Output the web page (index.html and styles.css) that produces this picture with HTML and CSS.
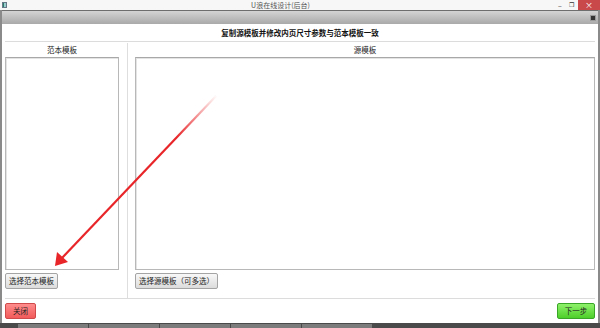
FILE: index.html
```html
<!DOCTYPE html>
<html lang="zh">
<head>
    <meta charset="UTF-8">
    <title>U浪在线设计(后台)</title>
    <link rel="stylesheet" href="styles.css">
</head>
<body>
    <div class="titlebar">
        <span class="app-icon"></span>
        <span class="app-title">U浪在线设计(后台)</span>
        <div class="win-controls">
            <span class="ctl ctl-min">&#8211;</span>
            <span class="ctl ctl-max">&#10064;</span>
            <span class="ctl ctl-close">&#215;</span>
        </div>
    </div>

    <div class="window">
        <div class="window-head">
            <span class="head-close"></span>
        </div>
        <div class="content">
            <h1 class="heading">复制源模板并修改内页尺寸参数与范本模板一致</h1>

            <div class="panels">
                <div class="panel panel-left">
                    <div class="panel-label">范本模板</div>
                    <div class="list-box"></div>
                    <div class="panel-actions">
                        <button class="btn">选择范本模板</button>
                    </div>
                </div>
                <div class="divider"></div>
                <div class="panel panel-right">
                    <div class="panel-label">源模板</div>
                    <div class="list-box"></div>
                    <div class="panel-actions">
                        <button class="btn">选择源模板（可多选）</button>
                    </div>
                </div>
            </div>

            <div class="footer">
                <button class="btn btn-red">关闭</button>
                <button class="btn btn-green">下一步</button>
            </div>
        </div>
    </div>

    <div class="taskbar">
        <span class="task"></span>
        <span class="task"></span>
        <span class="task"></span>
        <span class="task"></span>
        <span class="task"></span>
    </div>

    <!-- annotation arrow -->
    <svg class="arrow" width="600" height="328" viewBox="0 0 600 328">
        <defs>
            <linearGradient id="fade" gradientUnits="userSpaceOnUse" x1="217" y1="95" x2="56" y2="265">
                <stop offset="0" stop-color="#e8262a" stop-opacity="0"/>
                <stop offset="0.25" stop-color="#e8262a" stop-opacity="1"/>
                <stop offset="1" stop-color="#e8262a" stop-opacity="1"/>
            </linearGradient>
        </defs>
        <line x1="217" y1="95" x2="62" y2="258" stroke="url(#fade)" stroke-width="2.2"/>
        <polygon points="55,266 57,252 68,262" fill="#e8262a"/>
    </svg>
</body>
</html>
```

FILE: styles.css
```css
* {
    box-sizing: border-box;
}

body {
    font-family: "Noto Sans CJK SC", "Liberation Sans", sans-serif;
    margin: 0;
    width: 600px;
    height: 328px;
    overflow: hidden;
    background: #fff;
    position: relative;
    display: flex;
    flex-direction: column;
}

/* Title bar */
.titlebar {
    height: 10px;
    background: #f7f7f7;
    display: flex;
    align-items: center;
    position: relative;
}

.app-icon {
    width: 5px;
    height: 6px;
    margin-left: 2px;
    background: linear-gradient(90deg, #2a7a6a 50%, #9cc 50%);
    border: 1px solid #678;
}

.app-title {
    flex: 1;
    text-align: center;
    font-size: 7px;
    color: #555;
    line-height: 10px;
}

.win-controls {
    display: flex;
    align-items: center;
    height: 10px;
}

.ctl {
    font-size: 7px;
    line-height: 10px;
    color: #333;
    text-align: center;
}

.ctl-min {
    width: 12px;
}

.ctl-max {
    width: 10px;
    font-size: 6px;
}

.ctl-close {
    width: 22px;
    height: 10px;
    margin-left: 2px;
    background: #c9484a;
    color: #fff;
    font-size: 8px;
}

/* Window */
.window {
    height: 313px;
    display: flex;
    flex-direction: column;
    border-left: 2px solid #8a8a8a;
    border-right: 2px solid #8a8a8a;
}

.window-head {
    height: 14px;
    border-top: 1px solid #6e6e6e;
    background: linear-gradient(#d4d4d4, #a9a9a9);
    display: flex;
    justify-content: flex-end;
    align-items: center;
    padding-right: 3px;
}

.head-close {
    width: 4px;
    height: 4px;
    background: #333;
    outline: 1px solid #999;
}

.content {
    flex: 1;
    padding: 0 3px;
    display: flex;
    flex-direction: column;
}

.heading {
    margin: 0;
    height: 18px;
    line-height: 17px;
    font-size: 7.5px;
    font-weight: bold;
    text-align: center;
    color: #111;
    border-bottom: 1px solid #dcdcdc;
}

/* Panels */
.panels {
    display: flex;
    height: 257px;
    border-bottom: 1px solid #dcdcdc;
}

.panel {
    display: flex;
    flex-direction: column;
}

.panel-left {
    width: 114px;
}

.panel-right {
    flex: 1;
}

.divider {
    width: 1px;
    margin: 1px 7px 0 8px;
    background: #dedede;
}

.panel-label {
    height: 15px;
    line-height: 15px;
    text-align: center;
    font-size: 7.5px;
    color: #222;
}

.list-box {
    height: 213px;
    border: 1px solid #b8b8b8;
    border-top-color: #a8a8a8;
    box-shadow: inset 1px 1px 0 #e4e4e4;
    background: #fff;
}

.panel-actions {
    display: flex;
    padding-top: 3px;
}

.btn {
    font-family: "Noto Sans CJK SC", sans-serif;
    font-size: 7.5px;
    height: 16px;
    padding: 0 3px;
    line-height: 14px;
    border: 1px solid #a4a4a4;
    border-radius: 2px;
    background: linear-gradient(#f8f8f8, #dcdcdc);
    color: #222;
    cursor: pointer;
}

/* Footer */
.footer {
    flex: 1;
    display: flex;
    justify-content: space-between;
    align-items: flex-start;
    padding-top: 4px;
}

.btn-red {
    width: 31px;
    height: 16px;
    background: linear-gradient(#ff8c8c, #f25a5a);
    border-color: #cf4a4a;
    color: #222;
}

.btn-green {
    width: 38px;
    height: 16px;
    background: linear-gradient(#8ef26a, #4dcf2a);
    border-color: #3aa628;
    color: #222;
}

/* Taskbar strip */
.taskbar {
    flex: 1;
    background: #4a4a4a;
    display: flex;
    gap: 1px;
    padding-left: 18px;
    padding-top: 1px;
}

.task {
    width: 70px;
    background: #7c7c7c;
}

.arrow {
    position: absolute;
    left: 0;
    top: 0;
    pointer-events: none;
}
```
